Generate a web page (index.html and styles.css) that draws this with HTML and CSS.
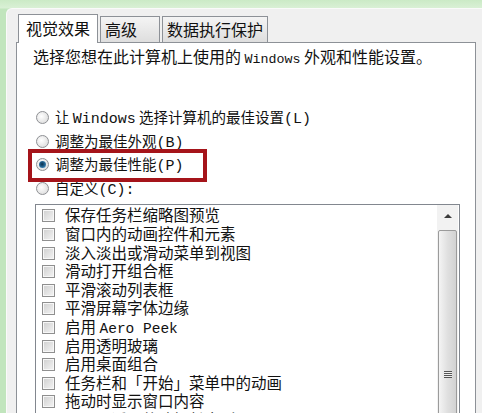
FILE: index.html
```html
<!DOCTYPE html>
<html lang="zh-CN">
  <head>
    <meta charset="UTF-8" />
    <meta name="viewport" content="width=device-width, initial-scale=1.0" />
    <title>性能选项</title>
    <link rel="stylesheet" href="styles.css">
  </head>
  <body>
    <div class="screen">
      <div class="window">
        <div class="tabs">
          <div class="tab active">视觉效果</div>
          <div class="tab wide">高级</div>
          <div class="tab">数据执行保护</div>
        </div>
        <div class="panel">
          <p class="intro">选择您想在此计算机上使用的 <span class="mono">Windows</span> 外观和性能设置。</p>
          <div class="options">
            <div class="radio"><span class="dot"></span>让 <span class="mono">Windows</span> 选择计算机的最佳设置<span class="mono">(L)</span></div>
            <div class="radio"><span class="dot"></span>调整为最佳外观<span class="mono">(B)</span></div>
            <div class="radio marked"><span class="dot checked"></span>调整为最佳性能<span class="mono">(P)</span></div>
            <div class="radio"><span class="dot"></span>自定义<span class="mono">(C):</span></div>
          </div>
          <div class="listbox">
            <ul class="items">
              <li><span class="check"></span>保存任务栏缩略图预览</li>
              <li><span class="check"></span>窗口内的动画控件和元素</li>
              <li><span class="check"></span>淡入淡出或滑动菜单到视图</li>
              <li><span class="check"></span>滑动打开组合框</li>
              <li><span class="check"></span>平滑滚动列表框</li>
              <li><span class="check"></span>平滑屏幕字体边缘</li>
              <li><span class="check"></span>启用 <span class="mono">Aero Peek</span></li>
              <li><span class="check"></span>启用透明玻璃</li>
              <li><span class="check"></span>启用桌面组合</li>
              <li><span class="check"></span>任务栏和「开始」菜单中的动画</li>
              <li><span class="check"></span>拖动时显示窗口内容</li>
              <li><span class="check"></span>显示亚透明的选择长方形</li>
            </ul>
            <div class="scrollbar">
              <div class="arrow-up"></div>
              <div class="thumb">
                <div class="grip"></div>
              </div>
            </div>
          </div>
        </div>
      </div>
    </div>
  </body>
</html>
```

FILE: styles.css
```css
/* 性能选项 - 视觉效果 */
body {
  margin: 0;
  padding: 0;
  font-family: "Noto Sans CJK SC", sans-serif;
  font-size: 16px;
  color: #111;
  background-color: #c4e6c0;
}

.screen {
  width: 482px;
  height: 413px;
  overflow: hidden;
  box-sizing: border-box;
  padding: 8px 0 0 6px;
  background: linear-gradient(to bottom, #cbeac6 0, #d9f0d5 8px, #c1e5bd 9px);
}

.window {
  height: 100%;
  box-sizing: border-box;
  padding: 4px 6px 0 9px;
  background-color: #f0f0f0;
  border-top: 1px solid #fafafa;
  border-left: 1px solid #fafafa;
  border-top-left-radius: 6px;
}

.mono {
  font-family: "Liberation Mono", monospace;
  font-size: 13.3px;
}

/* tabs */
.tabs {
  display: flex;
  align-items: flex-end;
  gap: 2px;
  padding-left: 2px;
  height: 29px;
}

.tab {
  height: 25px;
  line-height: 25px;
  padding: 0 4px;
  border: 1px solid #8d9197;
  border-bottom: none;
  background: linear-gradient(to bottom, #f4f4f4, #dedede);
  white-space: nowrap;
}

.tab.wide {
  width: 50px;
}

.tab.active {
  position: relative;
  z-index: 1;
  height: 28px;
  line-height: 27px;
  padding: 0 7px;
  margin-bottom: -1px;
  background: #fff;
}

/* panel */
.panel {
  height: 400px;
  border: 1px solid #8d9197;
  background-color: #fff;
}

.intro {
  margin: 0;
  padding: 3px 0 0 16px;
  line-height: 20px;
  white-space: nowrap;
}

.options {
  margin-top: 35px;
}

.radio {
  height: 23.6px;
  line-height: 23.6px;
  padding-left: 19px;
  font-size: 14.5px;
  white-space: nowrap;
}

.radio .mono {
  font-size: 15px;
}

.radio.marked {
  position: relative;
}

.radio.marked::after {
  content: "";
  position: absolute;
  left: 11px;
  top: -3px;
  width: 171px;
  height: 25px;
  border: 4px solid #a5141a;
}

.dot {
  display: inline-block;
  position: relative;
  vertical-align: -1px;
  width: 11px;
  height: 11px;
  margin-right: 6px;
  border: 1px solid #8e9094;
  border-radius: 50%;
  background: radial-gradient(circle at 40% 40%, #ffffff, #d6d6d6);
}

.dot.checked::after {
  content: "";
  position: absolute;
  left: 2px;
  top: 2px;
  width: 7px;
  height: 7px;
  border-radius: 50%;
  background: radial-gradient(circle at 45% 45%, #0c2f4a 0, #1d5a85 40%, #5fa9dd 100%);
}

/* list */
.listbox {
  display: flex;
  height: 240px;
  margin: 5px 15px 0 18px;
  border: 1px solid #82878f;
  background-color: #fff;
  overflow: hidden;
}

.items {
  flex: 1;
  margin: 0;
  padding: 0 0 0 6px;
  list-style: none;
  font-size: 15.5px;
}

.items li {
  height: 18.6px;
  line-height: 18.6px;
  white-space: nowrap;
}

.items .mono {
  font-size: 14.5px;
}

.check {
  display: inline-block;
  vertical-align: -1px;
  width: 11px;
  height: 11px;
  margin-right: 10px;
  border: 1px solid #8f8f8f;
  background: linear-gradient(135deg, #cfcfcf, #f4f4f4);
  box-shadow: inset 0 0 0 1px #f7f7f7;
}

.scrollbar {
  display: flex;
  flex-direction: column;
  width: 21px;
  margin-right: 1px;
  background-color: #f2f2f2;
}

.arrow-up {
  position: relative;
  height: 24px;
}

.arrow-up::after {
  content: "";
  position: absolute;
  left: 7px;
  top: 9px;
  border-left: 4px solid transparent;
  border-right: 4px solid transparent;
  border-bottom: 4px solid #3c3c3c;
}

.thumb {
  flex: 1;
  display: flex;
  justify-content: center;
  margin: 1px 1px 0;
  padding-top: 140px;
  border: 1px solid #9b9b9b;
  border-radius: 2px;
  background: linear-gradient(to right, #f4f4f4, #e0e0e0 50%, #d2d2d2);
}

.grip {
  width: 8px;
  height: 7px;
  background: repeating-linear-gradient(to bottom, #555 0, #555 1px, #eee 1px, #eee 2px);
}
```
